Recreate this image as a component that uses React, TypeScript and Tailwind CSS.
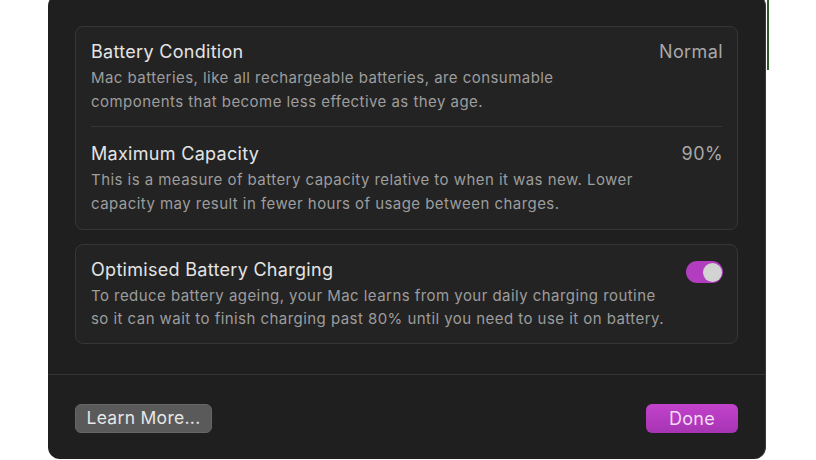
import React from "react";

const font = { fontFamily: "Inter, 'Noto Sans', sans-serif" };

function Row({
  title,
  value,
  lines,
  className,
}: {
  title: string;
  value?: string;
  lines: string[];
  className: string;
}) {
  return (
    <div className={`flex items-start justify-between pl-[15px] pr-[14px] ${className}`}>
      <div className="flex flex-col">
        <div className="text-[18px] leading-[22px] text-[#e4e4e4] tracking-[0.3px]">{title}</div>
        <div className="mt-[3px] text-[15px] leading-[23.5px] text-[#9d9d9d] tracking-[0.45px]">
          {lines.map((l) => (
            <div key={l} className="whitespace-nowrap">{l}</div>
          ))}
        </div>
      </div>
      {value && <div className="text-[18px] leading-[22px] text-[#a8a8a8] tracking-[0.4px]">{value}</div>}
    </div>
  );
}

export default function App() {
  return (
    <div className="flex h-[460px] w-[816px] overflow-hidden bg-white" style={font}>
      <div className="ml-[48px] mt-[-6px] flex h-[465px] w-[718px] flex-col rounded-[12px] border-r border-[#3a3a3a] bg-[#1f1f1f]">
        <div className="flex flex-col gap-[14px] px-[27px] pt-[32px]">
          <div className="flex flex-col rounded-[8px] border border-[#363636] bg-[#232323]">
            <Row
              className="pt-[14px] pb-[13px]"
              title="Battery Condition"
              value="Normal"
              lines={[
                "Mac batteries, like all rechargeable batteries, are consumable",
                "components that become less effective as they age.",
              ]}
            />
            <div className="mx-[15px] h-px bg-[#353535]" />
            <Row
              className="pt-[16px] pb-[14px]"
              title="Maximum Capacity"
              value="90%"
              lines={[
                "This is a measure of battery capacity relative to when it was new. Lower",
                "capacity may result in fewer hours of usage between charges.",
              ]}
            />
          </div>
          <div className="flex items-start justify-between rounded-[8px] border border-[#363636] bg-[#232323] pl-[15px] pr-[14px] pt-[14px] pb-[13px]">
            <div className="flex flex-col">
              <div className="text-[18px] leading-[22px] text-[#e4e4e4] tracking-[0.3px]">Optimised Battery Charging</div>
              <div className="mt-[3px] text-[15px] leading-[23px] text-[#9d9d9d] tracking-[0.45px]">
                <div className="whitespace-nowrap">To reduce battery ageing, your Mac learns from your daily charging routine</div>
                <div className="whitespace-nowrap">so it can wait to finish charging past 80% until you need to use it on battery.</div>
              </div>
            </div>
            <div className="mt-[2px] flex h-[22px] w-[37px] shrink-0 items-center justify-end rounded-full bg-[#b33dbf] pr-[1.5px]">
              <div className="h-[19px] w-[19px] rounded-full bg-[#d3d3d3]" />
            </div>
          </div>
        </div>
        <div className="mt-[30px] h-px bg-[#333333]" />
        <div className="flex items-center justify-between px-[27px] pt-[29px]">
          <button className="flex h-[29px] w-[137px] items-center justify-center rounded-[6px] border border-[#666] bg-[#5a5a5a] text-[17.5px] tracking-[0.3px] text-[#e6e6e6]">
            Learn More...
          </button>
          <button className="flex h-[29px] w-[92px] items-center justify-center rounded-[6px] bg-gradient-to-b from-[#c243cc] to-[#a634b2] text-[18px] tracking-[0.3px] text-[#f2dcf4]">
            Done
          </button>
        </div>
      </div>
      <div className="ml-[1px] h-[70px] w-[2px] bg-[#2f5a2a]" />
    </div>
  );
}
